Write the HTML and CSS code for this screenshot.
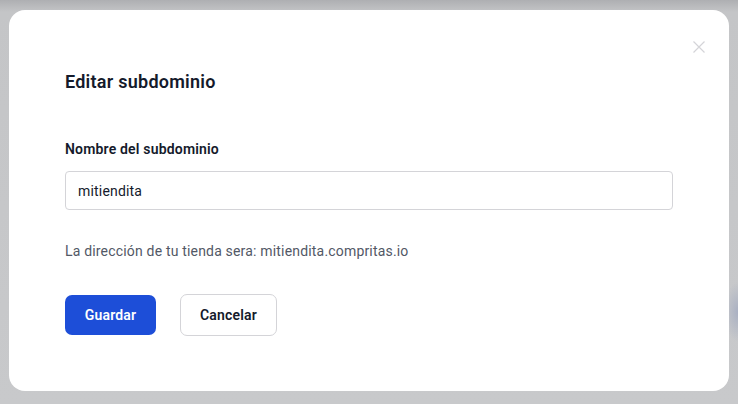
FILE: index.html
```html
<!DOCTYPE html>
<html lang="es">
<head>
<meta charset="utf-8">
<link rel="stylesheet" href="styles.css">
</head>
<body>
<div class="backdrop">
  <div class="modal">
    <button class="close" aria-label="Cerrar">
      <svg width="12" height="12" viewBox="0 0 12 12"><path d="M0.5 0.5 L11.5 11.5 M11.5 0.5 L0.5 11.5" stroke="#d4d4d8" stroke-width="1.2" fill="none"/></svg>
    </button>
    <h2 class="title">Editar subdominio</h2>
    <label class="label" for="sub">Nombre del subdominio</label>
    <input class="input" id="sub" type="text" value="mitiendita">
    <p class="help">La dirección de tu tienda sera: mitiendita.compritas.io</p>
    <div class="actions">
      <button class="btn btn-primary">Guardar</button>
      <button class="btn btn-secondary">Cancelar</button>
    </div>
  </div>
</div>
</body>
</html>
```
FILE: styles.css
```css
* { box-sizing: border-box; }
html, body { margin: 0; padding: 0; }
body {
  width: 738px;
  height: 404px;
  overflow: hidden;
  font-family: Roboto, "Noto Sans", sans-serif;
  letter-spacing: 0.18px;
  background:
    radial-gradient(ellipse 14px 30px at 738px 312px, #a9b0c2 0%, rgba(169,176,194,0) 100%),
    linear-gradient(180deg, #aeafb2 0px, #c4c5c7 12px, #c8c9cb 100%);
}
.backdrop {
  padding: 10px 9px 0 9px;
}
.modal {
  position: relative;
  width: 720px;
  height: 381px;
  background: #ffffff;
  border-radius: 16px;
  padding: 60px 56px 0 56px;
  display: flex;
  flex-direction: column;
  align-items: flex-start;
}
.close {
  position: absolute;
  top: 31px;
  right: 24px;
  border: 0;
  background: none;
  padding: 0;
  width: 12px;
  height: 12px;
  display: flex;
}
.title {
  margin: 0;
  font-size: 18px;
  font-weight: 600;
  line-height: 24px;
  color: #141a2b;
  letter-spacing: 0.25px;
}
.label {
  margin-top: 45px;
  font-size: 14px;
  font-weight: 600;
  line-height: 20px;
  color: #141a2b;
}
.input {
  margin-top: 12px;
  width: 608px;
  height: 39px;
  border: 1px solid #d4d4d8;
  border-radius: 4px;
  padding: 0 12px;
  font-family: inherit;
  letter-spacing: inherit;
  font-size: 14px;
  color: #141a2b;
  outline: none;
}
.help {
  margin: 31px 0 0 0;
  font-size: 14px;
  line-height: 20px;
  color: #525866;
}
.actions {
  margin-top: 33px;
  display: flex;
  gap: 24px;
  align-items: center;
}
.btn {
  font-family: inherit;
  letter-spacing: inherit;
  font-size: 14px;
  font-weight: 600;
  border-radius: 7px;
  cursor: pointer;
}
.btn-primary {
  width: 91px;
  height: 40px;
  background: #1d4ed8;
  color: #ffffff;
  border: 0;
}
.btn-secondary {
  width: 97px;
  height: 42px;
  background: #ffffff;
  color: #141a2b;
  border: 1px solid #d4d4d8;
}
```
